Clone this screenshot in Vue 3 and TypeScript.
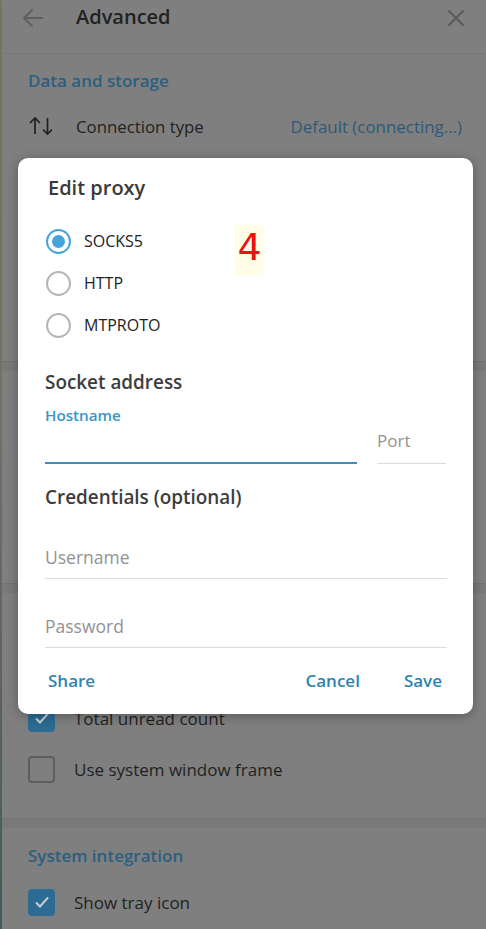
<script setup lang="ts">
const protocols = [
  { label: 'SOCKS5', on: true },
  { label: 'HTTP', on: false },
  { label: 'MTPROTO', on: false },
]
</script>

<template>
  <div class="page">
    <div class="strip"></div>
    <div class="settings">
      <header class="head">
        <svg class="back" width="24" height="24" viewBox="0 0 24 24" fill="none" stroke="currentColor" stroke-width="1.8">
          <path d="M22 12H3M11.5 3.5 3 12l8.5 8.5" />
        </svg>
        <span class="head-title">Advanced</span>
        <svg class="close" width="20" height="20" viewBox="0 0 20 20" fill="none" stroke="currentColor" stroke-width="1.8">
          <path d="M2.500 2.500l15 15M17.500 2.500l-15 15" />
        </svg>
      </header>
      <section class="sec sec-a">
        <h3>Data and storage</h3>
        <div class="conn">
          <svg width="24" height="20" viewBox="0 0 24 20" fill="none" stroke="#202020" stroke-width="1.7">
            <path d="M7 18V2M2 7l5-5 5 5M19.500 2v16M15 13.500l4.500 4.500 4.500-4.500" />
          </svg>
          <span class="conn-label">Connection type</span>
          <span class="conn-val">Default (connecting...)</span>
        </div>
      </section>
      <section class="sec sec-b"></section>
      <section class="sec sec-c">
        <div class="check-row">
          <span class="box on"><svg width="16" height="14" viewBox="0 0 16 14" fill="none" stroke="#c3ced6" stroke-width="2"><path d="M2 7.500 6 11.500 14 2.500" /></svg></span>
          <span>Total unread count</span>
        </div>
        <div class="check-row">
          <span class="box"></span>
          <span>Use system window frame</span>
        </div>
      </section>
      <section class="sec sec-d">
        <h3>System integration</h3>
        <div class="check-row">
          <span class="box on"><svg width="16" height="14" viewBox="0 0 16 14" fill="none" stroke="#c3ced6" stroke-width="2"><path d="M2 7.500 6 11.500 14 2.500" /></svg></span>
          <span>Show tray icon</span>
        </div>
      </section>
    </div>

    <div class="modal">
      <h2 class="title">Edit proxy</h2>
      <div class="radios">
        <div v-for="p in protocols" :key="p.label" class="radio-row">
          <span class="radio" :class="{ active: p.on }"></span>
          <span>{{ p.label }}</span>
        </div>
      </div>
      <h4 class="group first">Socket address</h4>
      <div class="address">
        <div class="field host">
          <span class="float">Hostname</span>
        </div>
        <div class="field port"><span class="ph">Port</span></div>
      </div>
      <h4 class="group second">Credentials (optional)</h4>
      <div class="field cred user"><span class="ph">Username</span></div>
      <div class="field cred pass"><span class="ph">Password</span></div>
      <footer class="actions">
        <a class="share">Share</a>
        <a>Cancel</a>
        <a>Save</a>
      </footer>
      <div class="mark">4</div>
    </div>
  </div>
</template>

<style>
html, body { margin: 0; padding: 0; background: #7f7f7f; }
</style>

<style scoped>
.page {
  position: relative;
  width: 486px;
  height: 929px;
  overflow: hidden;
  display: flex;
  background: #7f7f7f;
  font-family: "Open Sans", sans-serif;
  color: #1d1d1d;
}
.strip {
  width: 2px;
  flex: none;
  background: linear-gradient(#77745f, #6f7264 45%, #46585f);
}
.settings { flex: 1; display: flex; flex-direction: column; min-width: 0; background: #797979; }
.head {
  height: 54px;
  flex: none;
  box-sizing: border-box;
  display: flex;
  align-items: center;
  background: #7f7f7f;
  border-bottom: 1px solid #777;
  padding: 0 20px 18px 19px;
}
.back { color: #5f5f5f; }
.head-title { margin: -1px 0 0 31px; font-size: 20px; line-height: 24px; font-weight: 600; color: #222; }
.close { margin-left: auto; color: #5a5a5a; }
.sec { flex: none; border-bottom: 1px solid #727272; box-sizing: border-box; padding-left: 26px; background: #7f7f7f; }
h3 { margin: 0; font-size: 17px; font-weight: 600; color: #2b5f80; line-height: 24px; }
.sec-a { height: 308px; padding-top: 15px; }
.conn { display: flex; align-items: center; margin-top: 17px; padding-right: 24px; height: 32px; font-size: 16.900px; }
.conn-label { margin-left: 24px; font-size: 16.800px; color: #222; }
.conn-val { margin-left: auto; color: #2e5a78; }
.sec-b { height: 213px; margin-top: 9px; }
.sec-c {
  height: 226px;
  margin-top: 9px;
  padding-top: 109px;
  display: flex;
  flex-direction: column;
  gap: 19px;
}
.sec-d { flex: 1; margin-top: 9px; border-bottom: 0; padding-top: 16px; }
.sec-d .check-row { margin-top: 18px; }
.check-row { display: flex; align-items: center; gap: 19px; height: 32px; font-size: 17px; color: #1f1f1f; }
.box {
  width: 27px;
  height: 27px;
  box-sizing: border-box;
  border-radius: 4px;
  border: 2px solid #5e5e5e;
  display: flex;
  align-items: center;
  justify-content: center;
}
.box.on { background: #2c6b93; border-color: #2c6b93; }

.modal {
  position: absolute;
  left: 18px;
  top: 158px;
  width: 455px;
  height: 556px;
  box-sizing: border-box;
  background: #fff;
  border-radius: 10px;
  box-shadow: 0 2px 12px rgba(0, 0, 0, .3);
  padding: 0 27px;
  display: flex;
  flex-direction: column;
  color: #222;
}
.title { margin: 16px 0 0 3px; font-size: 20px; line-height: 28px; font-weight: 600; color: #3a3a3a; }
.radios { margin-top: 26px; margin-left: 1px; display: flex; flex-direction: column; gap: 16px; }
.radio-row { display: flex; align-items: center; gap: 13px; height: 26px; font-size: 16px; color: #222; }
.radio {
  width: 25px;
  height: 25px;
  box-sizing: border-box;
  border: 2px solid #b5b5b5;
  border-radius: 50%;
  position: relative;
}
.radio.active { border-color: #45a3d9; }
.radio.active::after {
  content: "";
  position: absolute;
  inset: 4px;
  border-radius: 50%;
  background: #45a3d9;
}
.group { margin: 0; font-size: 18.900px; line-height: 26px; font-weight: 600; color: #3d3d3d; }
.group.first { margin-top: 31px; }
.group.second { margin-top: 20px; }
.address { display: flex; gap: 20px; margin-top: 9px; }
.field { position: relative; box-sizing: border-box; border-bottom: 1px solid #dcdcdc; }
.host { flex: none; width: 312px; height: 60px; border-bottom: 2px solid #3c8dbc; }
.float { position: absolute; left: 0; top: 0; font-size: 15.200px; line-height: 22px; font-weight: 600; color: #3a94c6; }
.port { flex: none; width: 69px; height: 60px; display: flex; align-items: flex-end; padding-bottom: 10px; }
.ph { font-size: 17px; line-height: 24px; color: #929292; }
.cred { height: 46px; display: flex; align-items: flex-end; padding-bottom: 9px; width: 402px; }
.cred .ph { font-size: 17.500px; }
.user { margin-top: 23px; }
.pass { margin-top: 23px; }
.actions { margin-top: auto; margin-bottom: 20px; display: flex; gap: 44px; font-size: 17px; font-weight: 600; color: #2d84b5; line-height: 26px; padding: 0 4px 0 3px; }
.share { margin-right: auto; }
.mark {
  position: absolute;
  left: 217px;
  top: 67px;
  width: 29px;
  height: 50px;
  background: #fffde6;
  color: #ee1111;
  font-family: "DejaVu Sans", sans-serif;
  font-size: 38px;
  line-height: 44px;
  text-align: center;
}
</style>
